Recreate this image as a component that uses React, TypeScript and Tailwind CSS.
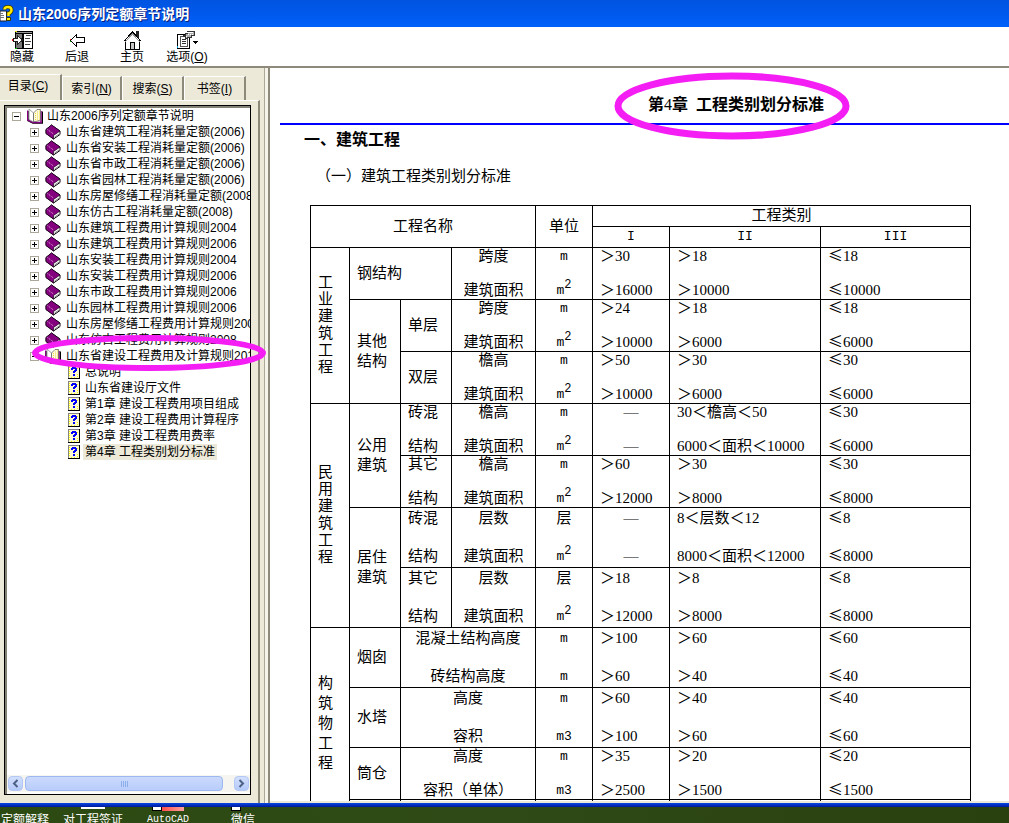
import { useState, type ReactNode } from 'react'

interface TreeBook {
  title: string
  pages?: string[]
}

interface LeadCell {
  text: string
  rowSpan?: number
  colSpan?: number
  stack?: 'tight' | 'loose' | 'pair'
}

interface StandardRow {
  lead: LeadCell[]
  names: [string, string]
  nameSpan?: number
  units: [string, string]
  one: [string, string]
  two: [string, string]
  three: [string, string]
  tall?: boolean
}

const books: TreeBook[] = [
  { title: '山东省建筑工程消耗量定额(2006)' },
  { title: '山东省安装工程消耗量定额(2006)' },
  { title: '山东省市政工程消耗量定额(2006)' },
  { title: '山东省园林工程消耗量定额(2006)' },
  { title: '山东房屋修缮工程消耗量定额(2008)' },
  { title: '山东仿古工程消耗量定额(2008)' },
  { title: '山东建筑工程费用计算规则2004' },
  { title: '山东建筑工程费用计算规则2006' },
  { title: '山东安装工程费用计算规则2004' },
  { title: '山东安装工程费用计算规则2006' },
  { title: '山东市政工程费用计算规则2006' },
  { title: '山东园林工程费用计算规则2006' },
  { title: '山东房屋修缮工程费用计算规则2008' },
  { title: '山东仿古工程费用计算规则2008' },
  {
    title: '山东省建设工程费用及计算规则2011',
    pages: [
      '总说明',
      '山东省建设厅文件',
      '第1章 建设工程费用项目组成',
      '第2章 建设工程费用计算程序',
      '第3章 建设工程费用费率',
      '第4章 工程类别划分标准',
    ],
  },
]

const tabs = [
  { label: '目录', hotkey: 'C', width: 'w-[62px]' },
  { label: '索引', hotkey: 'N', width: 'w-[60px]' },
  { label: '搜索', hotkey: 'S', width: 'w-[62px]' },
  { label: '书签', hotkey: 'I', width: 'w-[62px]' },
]

const rows: StandardRow[] = [
  {
    lead: [{ text: '工业建筑工程', rowSpan: 3, stack: 'tight' }, { text: '钢结构', colSpan: 2 }],
    names: ['跨度', '建筑面积'], units: ['m', 'm2'],
    one: ['＞30', '＞16000'], two: ['＞18', '＞10000'], three: ['≤18', '≤10000'],
  },
  {
    lead: [{ text: '其他结构', rowSpan: 2, stack: 'loose' }, { text: '单层' }],
    names: ['跨度', '建筑面积'], units: ['m', 'm2'],
    one: ['＞24', '＞10000'], two: ['＞18', '＞6000'], three: ['≤18', '≤6000'],
  },
  {
    lead: [{ text: '双层' }],
    names: ['檐高', '建筑面积'], units: ['m', 'm2'],
    one: ['＞50', '＞10000'], two: ['＞30', '＞6000'], three: ['≤30', '≤6000'],
  },
  {
    lead: [
      { text: '民用建筑工程', rowSpan: 4, stack: 'tight' },
      { text: '公用建筑', rowSpan: 2, stack: 'loose' },
      { text: '砖混结构', stack: 'pair' },
    ],
    names: ['檐高', '建筑面积'], units: ['m', 'm2'],
    one: ['—', '—'], two: ['30＜檐高＜50', '6000＜面积＜10000'], three: ['≤30', '≤6000'],
  },
  {
    lead: [{ text: '其它结构', stack: 'pair' }],
    names: ['檐高', '建筑面积'], units: ['m', 'm2'],
    one: ['＞60', '＞12000'], two: ['＞30', '＞8000'], three: ['≤30', '≤8000'],
  },
  {
    lead: [{ text: '居住建筑', rowSpan: 2, stack: 'loose' }, { text: '砖混结构', stack: 'pair' }],
    names: ['层数', '建筑面积'], units: ['层', 'm2'],
    one: ['—', '—'], two: ['8＜层数＜12', '8000＜面积＜12000'], three: ['≤8', '≤8000'],
    tall: true,
  },
  {
    lead: [{ text: '其它结构', stack: 'pair' }],
    names: ['层数', '建筑面积'], units: ['层', 'm2'],
    one: ['＞18', '＞12000'], two: ['＞8', '＞8000'], three: ['≤8', '≤8000'],
    tall: true,
  },
  {
    lead: [{ text: '构筑物工程', rowSpan: 4, stack: 'loose' }, { text: '烟囱' }],
    names: ['混凝土结构高度', '砖结构高度'], nameSpan: 2, units: ['m', 'm'],
    one: ['＞100', '＞60'], two: ['＞60', '＞40'], three: ['≤60', '≤40'],
    tall: true,
  },
  {
    lead: [{ text: '水塔' }],
    names: ['高度', '容积'], nameSpan: 2, units: ['m', 'm3'],
    one: ['＞60', '＞100'], two: ['＞40', '＞60'], three: ['≤40', '≤60'],
    tall: true,
  },
  {
    lead: [{ text: '筒仓' }],
    names: ['高度', '容积（单体）'], nameSpan: 2, units: ['m', 'm3'],
    one: ['＞35', '＞2500'], two: ['＞20', '＞1500'], three: ['≤20', '≤1500'],
  },
]

const cellCls = 'border border-black p-0'
const headCls = 'border border-black px-0 pt-0 pb-[2px] font-normal'

function BookIcon() {
  return (
    <svg width="16" height="16" viewBox="0 0 16 16" className="shrink-0">
      <path d="M6.500 1L15 7v3.500L8.500 15 1 9.500v-4z" fill="#fff" stroke="#000" />
      <path d="M6.500 1L15 7 8.500 11.500V15L1 9.500v-4z" fill="#84007f" stroke="#1a001a" strokeWidth="0.700" />
      <path d="M9.500 13L15 9.500" stroke="#8c8c8c" />
      <path d="M2.500 5.500l6 4.500" stroke="#e4b8e4" strokeDasharray="1 1" />
    </svg>
  )
}

function OpenBookIcon() {
  return (
    <svg width="16" height="16" viewBox="0 0 16 16" className="shrink-0">
      <path d="M1 3v9.500L6 15h9.500V3.500" fill="none" stroke="#000" strokeWidth="1.500" />
      <path d="M.5 2.500v9.500L6 14.500h8V3" fill="none" stroke="#84007f" strokeWidth="1.500" />
      <path d="M2 1l4.500 4v9L2 11.500z" fill="#fff" stroke="#8c8c8c" strokeWidth="0.800" />
      <path d="M6.500 5l3.500-3.500h3.500V12L9 13.500H6.500z" fill="#fffbe0" stroke="#555" strokeWidth="0.700" />
      <path d="M8.500 5v8M10.500 3.500v9M12.500 2.500v9" stroke="#ecd83c" strokeDasharray="1 1" />
    </svg>
  )
}

function PageIcon() {
  return (
    <svg width="12" height="14" viewBox="0 0 12 14" className="shrink-0" shapeRendering="crispEdges">
      <path d="M0 0h12v14H0z" fill="#000" />
      <path d="M0 0h11v13H0z" fill="#848284" />
      <path d="M1 1h10v12H1z" fill="#fffbd0" />
      <path d="M1 2h1v1H1zM1 4h1v1H1zM1 6h1v1H1zM1 8h1v1H1zM1 10h1v1H1zM9 3h1v1H9zM9 9h1v1H9zM9 11h1v1H9zM3 12h1v1H3zM6 12h1v1H6z" fill="#ffff00" />
      <path d="M3 3h1V2h4v1h1v3H8v1H7v1H5V6h1V5h1V4H5v1H3zM5 9h2v2H5z" fill="#0000ff" />
    </svg>
  )
}

function Expander({ open }: { open: boolean }) {
  return (
    <svg width="9" height="9" viewBox="0 0 9 9" className="shrink-0" shapeRendering="crispEdges">
      <path d="M0 0h9v9H0z" fill="#aca899" />
      <path d="M1 1h7v7H1z" fill="#fff" />
      <path d={open ? 'M2 4h5v1H2z' : 'M2 4h5v1H2zM4 2h1v5H4z'} fill="#000" />
    </svg>
  )
}

function HideIcon() {
  return (
    <svg width="22" height="20" viewBox="0 0 22 20" shapeRendering="crispEdges">
      <path d="M4 1h18v18H4z" fill="#000" />
      <path d="M5 2h16v1H5z" fill="#999" />
      <path d="M5 4h6v14H5z" fill="#777" />
      <path d="M13 4h8v14h-8z" fill="#fff" />
      <path d="M15 5h5v1h-5zM14 8h5v1h-5zM14 11h6v1h-6zM14 14h5v1h-5z" fill="#444" />
      <path d="M2.500 8.500h4v-3l5 4.500-5 4.500v-3h-4z" fill="#fff" stroke="#222" />
      <path d="M4 1h2v1H4z" fill="#e8d800" />
      <path d="M1 9h1v2H1z" fill="#f00" />
      <path d="M4 18h2v1H4z" fill="#0b0" />
    </svg>
  )
}

function BackIcon() {
  return (
    <svg width="22" height="20" viewBox="0 0 22 20" shapeRendering="crispEdges">
      <path d="M4.500 10.500l6-6v3h8v5h-8v4z" fill="#fff" stroke="#000" />
      <path d="M4 9h1v1H4z" fill="#f00" />
      <path d="M4 11h1v1H4z" fill="#0b0" />
    </svg>
  )
}

function HomeIcon() {
  return (
    <svg width="22" height="20" viewBox="0 0 22 20" shapeRendering="crispEdges">
      <path d="M15 1h3v7h-3z" fill="#222" />
      <path d="M4.500 9.500v10h14v-10l-7-7z" fill="#fff" stroke="#000" />
      <path d="M2.500 11.500l9-9.500 9 9.500" fill="none" stroke="#000" />
      <path d="M4 12l7.500-8 7.500 8" fill="none" stroke="#999" />
      <path d="M9.500 12.500h4v7h-4z" fill="#c8c8c8" stroke="#000" />
    </svg>
  )
}

function OptionsIcon() {
  return (
    <svg width="22" height="20" viewBox="0 0 22 20" shapeRendering="crispEdges">
      <path d="M1.500 4.500h12v14h-12z" fill="#fff" stroke="#000" />
      <path d="M4.500 6.500h7v10h-7z" fill="#fff" stroke="#555" />
      <path d="M6 9h4v1H6zM6 11h4v1H6zM6 13h4v1H6z" fill="#333" />
      <path d="M7 5h2V3h2V1h7v4h-3v2h-4v1H9V6H7z" fill="#b0b0b0" stroke="#333" />
      <path d="M11 2h6v1h-6zM12 4h1v1h-1zM14 4h1v1h-1zM16 4h1v1h-1zM10 6h1v1h-1z" fill="#fff" />
      <path d="M17 11h5v1h-1v1h-1v1h-1v-1h-1v-1h-1z" fill="#000" />
      <path d="M1 16h1v2H1z" fill="#00a0e0" />
    </svg>
  )
}

function HelpLogo() {
  return (
    <svg width="16" height="18" viewBox="0 0 16 18" className="shrink-0">
      <path d="M0 6h6.500v10H0z" fill="#fff" stroke="#222" />
      <path d="M0 8.500h3M0 10.500h4M0 12.500h4" stroke="#777" />
      <path d="M4.500 4.500Q4.500 2 8 2t3.500 3Q11.500 7.500 8.500 8.500v2.500" fill="none" stroke="#3a3600" strokeWidth="4" />
      <path d="M4.500 4.500Q4.500 2 8 2t3.500 3Q11.500 7.500 8.500 8.500v2.500" fill="none" stroke="#ffea00" strokeWidth="2.500" />
      <path d="M6.500 12.500h4v3h-4z" fill="#ffea00" stroke="#3a3600" />
    </svg>
  )
}

function Hotkey({ label, hotkey }: { label: string; hotkey: string }) {
  return (
    <span>
      {label}(<u>{hotkey}</u>)
    </span>
  )
}

function ToolButton({ className, icon, children }: { className: string; icon: ReactNode; children: ReactNode }) {
  return (
    <button className={`flex flex-col items-center text-xs leading-[14px] whitespace-nowrap ${className}`}>
      {icon}
      {children}
    </button>
  )
}

function ContentsTree() {
  const [rootOpen, setRootOpen] = useState(true)
  const [openBook, setOpenBook] = useState(14)
  const [page, setPage] = useState('第4章 工程类别划分标准')

  return (
    <ul className="min-h-0 flex-1 overflow-hidden text-xs leading-4 whitespace-nowrap">
      <li>
        <button onClick={() => setRootOpen(!rootOpen)} className="flex h-4 items-center pl-[5px]">
          <Expander open={rootOpen} />
          <span className="ml-[6px]"><OpenBookIcon /></span>
          <span className="ml-1">山东2006序列定额章节说明</span>
        </button>
        {rootOpen && (
          <ul>
            {books.map((book, i) => (
              <li key={book.title}>
                <button
                  onClick={() => setOpenBook(openBook === i ? -1 : i)}
                  className="flex h-4 items-center pl-[23px]"
                >
                  <Expander open={openBook === i} />
                  <span className="ml-[6px]">{openBook === i ? <OpenBookIcon /> : <BookIcon />}</span>
                  <span className="ml-[5px]">{book.title}</span>
                </button>
                {openBook === i && book.pages && (
                  <ul>
                    {book.pages.map((title) => (
                      <li key={title}>
                        <button onClick={() => setPage(title)} className="flex h-4 items-center pl-[61px]">
                          <PageIcon />
                          <span className={`ml-[3px] px-[2px] ${title === page ? 'bg-[#ece9d8]' : ''}`}>{title}</span>
                        </button>
                      </li>
                    ))}
                  </ul>
                )}
              </li>
            ))}
          </ul>
        )}
      </li>
    </ul>
  )
}

function ScrollBar() {
  const btnCls = 'flex h-[15px] w-[15px] items-center justify-center rounded-sm border border-[#b4c8f6] bg-linear-to-b from-[#d3e0fd] to-[#b5cafa]'
  return (
    <div className="mb-[2px] flex h-[17px] items-center bg-[#f6f5f0] px-px">
      <button className={btnCls} aria-label="向左滚动">
        <svg width="7" height="9" viewBox="0 0 7 9"><path d="M5.500 1L2 4.500 5.500 8" fill="none" stroke="#4d6185" strokeWidth="2" /></svg>
      </button>
      <div className="ml-[2px] flex h-[15px] w-[198px] items-center justify-center gap-px rounded-sm border border-[#9db8f0] bg-linear-to-b from-[#cbdafd] to-[#b9cdfb]">
        <span className="h-[6px] w-px bg-[#8caeea]" />
        <span className="h-[6px] w-px bg-[#8caeea]" />
        <span className="h-[6px] w-px bg-[#8caeea]" />
        <span className="h-[6px] w-px bg-[#8caeea]" />
      </div>
      <button className={`ml-auto ${btnCls}`} aria-label="向右滚动">
        <svg width="7" height="9" viewBox="0 0 7 9"><path d="M1.500 1L5 4.500 1.500 8" fill="none" stroke="#4d6185" strokeWidth="2" /></svg>
      </button>
    </div>
  )
}

function Sidebar() {
  const [active, setActive] = useState('目录')

  return (
    <aside className="relative flex w-[270px] shrink-0 bg-[#ece9d8]">
      <div className="flex min-w-0 flex-1 flex-col pt-[6px]">
        <div role="tablist" className="flex h-[26px] items-end text-xs">
          {tabs.map((tab) => (
            <button
              key={tab.label}
              role="tab"
              aria-selected={active === tab.label}
              onClick={() => setActive(tab.label)}
              className={`border-t border-t-white border-r-2 border-r-[#8d8a7c] ${tab.width} ${
                active === tab.label ? 'h-[26px] pr-1 pb-[3px]' : 'h-6 border-l border-l-white'
              }`}
            >
              <Hotkey label={tab.label} hotkey={tab.hotkey} />
            </button>
          ))}
        </div>
        <div className="flex min-h-0 flex-1 flex-col border-t border-r-2 border-t-white border-r-[#8d8a7c] pt-1 pr-[7px] pb-2 pl-1">
          <div className="flex min-h-0 flex-1 flex-col border border-black bg-white">
            <div className="flex min-h-0 flex-1 flex-col border-t-2 border-l-2 border-[#848277]">
              <ContentsTree />
              <ScrollBar />
            </div>
          </div>
        </div>
      </div>
      <div className="ml-1 w-[6px] border-r-2 border-l border-r-[#8d8a7c] border-l-[#aca899] bg-[#f6f4ea]" />
      <svg className="pointer-events-none absolute top-[267px] left-[31px] z-10" width="236" height="36" viewBox="0 0 236 36">
        <ellipse cx="118" cy="18" rx="114" ry="15" fill="none" stroke="#f41df4" strokeWidth="6" />
      </svg>
    </aside>
  )
}

// ≤ is taken from the CJK face so that it keeps its full-width cell
function Value({ text }: { text: string }) {
  if (!text.startsWith('≤')) return <>{text}</>
  return (
    <>
      <span className="font-['Noto_Sans_CJK_SC',sans-serif] leading-[0px]">≤</span>
      {text.slice(1)}
    </>
  )
}

function Unit({ text }: { text: string }) {
  if (text === 'm2') {
    return <span className="font-['Liberation_Mono',monospace] text-[13px]">m<sup className="text-xs">2</sup></span>
  }
  if (text.startsWith('m')) {
    return <span className="font-['Liberation_Mono',monospace] text-[13px]">{text}</span>
  }
  return <>{text}</>
}

function Pair({ tall, className, children }: { tall?: boolean; className?: string; children: ReactNode }) {
  return (
    <div className={`flex flex-col justify-between leading-[17px] whitespace-nowrap ${tall ? 'h-[59px] py-[2px]' : 'h-[51px]'} ${className ?? ''}`}>
      {children}
    </div>
  )
}

function Lead({ cell, tall }: { cell: LeadCell; tall?: boolean }) {
  let content: ReactNode = cell.text
  if (cell.stack === 'pair') {
    content = (
      <Pair tall={tall}>
        <span>{cell.text.slice(0, 2)}</span>
        <span>{cell.text.slice(2)}</span>
      </Pair>
    )
  } else if (cell.stack) {
    const oneChar = (cell.rowSpan ?? 1) > 2
    content = (
      <div className={`${oneChar ? 'w-[15px]' : 'w-[30px]'} ${cell.stack === 'tight' ? 'leading-[17px]' : 'leading-5'}`}>
        {cell.text}
      </div>
    )
  }
  return (
    <td
      rowSpan={cell.rowSpan}
      colSpan={cell.colSpan}
      className={`border border-black pt-0 pr-0 pl-[7px] ${cell.stack === 'pair' ? 'pb-0' : 'pb-[2px]'}`}
    >
      {content}
    </td>
  )
}

function StandardTable() {
  return (
    <table className="mt-[18px] ml-[30px] w-[661px] table-fixed border-collapse text-[15px] leading-[18px]">
      <colgroup>
        <col className="w-[39px]" />
        <col className="w-[51px]" />
        <col className="w-[51px]" />
        <col className="w-[84px]" />
        <col className="w-[57px]" />
        <col className="w-[77px]" />
        <col className="w-[151px]" />
        <col className="w-[150px]" />
      </colgroup>
      <thead>
        <tr className="h-[21px]">
          <th rowSpan={2} colSpan={4} className={headCls}>工程名称</th>
          <th rowSpan={2} className={headCls}>单位</th>
          <th colSpan={3} className={headCls}>工程类别</th>
        </tr>
        <tr className="h-[21px] font-['Liberation_Mono',monospace] text-[13px]">
          <th className={`${cellCls} font-normal`}>I</th>
          <th className={`${cellCls} font-normal`}>II</th>
          <th className={`${cellCls} font-normal`}>III</th>
        </tr>
      </thead>
      <tbody>
        {rows.map((row, i) => (
          <tr key={i}>
            {row.lead.map((cell) => (
              <Lead key={cell.text} cell={cell} tall={row.tall} />
            ))}
            <td colSpan={row.nameSpan} className={cellCls}>
              <Pair tall={row.tall} className="items-center">
                <span>{row.names[0]}</span>
                <span>{row.names[1]}</span>
              </Pair>
            </td>
            <td className={cellCls}>
              <Pair tall={row.tall} className="items-center">
                <Unit text={row.units[0]} />
                <Unit text={row.units[1]} />
              </Pair>
            </td>
            {[row.one, row.two, row.three].map((values, j) => (
              <td key={j} className={cellCls}>
                <Pair tall={row.tall} className={values[0] === '—' ? 'items-center' : 'pl-[7px]'}>
                  <span><Value text={values[0]} /></span>
                  <span><Value text={values[1]} /></span>
                </Pair>
              </td>
            ))}
          </tr>
        ))}
        <tr className="h-5">
          <td className={cellCls} />
          <td colSpan={2} className={cellCls} />
          <td className={cellCls} />
          <td className={cellCls} />
          <td className={cellCls} />
          <td className={cellCls} />
        </tr>
      </tbody>
    </table>
  )
}

function Article() {
  return (
    <main className="min-w-0 flex-1 overflow-hidden border-b-2 border-[#ece9d8] bg-white pt-[26px] pl-[10px] font-['Liberation_Serif','Noto_Sans_CJK_SC',serif]">
      <div className="flex pl-[368px]">
        <h1 className="relative text-base leading-[22px] font-bold whitespace-nowrap">
          第<span className="font-normal">4</span>章 <span className="ml-1">工程类别划分标准</span>
          <svg className="pointer-events-none absolute -top-[22px] -left-[36px] z-10" width="240" height="68" viewBox="0 0 240 68">
            <ellipse cx="120" cy="34" rx="114" ry="30" fill="none" stroke="#f41df4" strokeWidth="7" />
          </svg>
        </h1>
      </div>
      <hr className="mt-[7px] h-[2px] border-0 bg-[#0000ff]" />
      <h2 className="mt-1 pl-6 text-base leading-[22px] font-bold">一、建筑工程</h2>
      <h3 className="mt-[14px] pl-9 text-[15px] leading-[22px]">（一）建筑工程类别划分标准</h3>
      <StandardTable />
    </main>
  )
}

function DesktopStrip() {
  return (
    <div className="grid h-4 grid-cols-[50px_86px_64px_86px] justify-items-center overflow-hidden bg-linear-to-r from-[#2c4a12] via-[#2f4a16] to-[#29400f] text-xs leading-4 text-white">
      <div className="pt-[5px]">定额解释</div>
      <div className="flex flex-col items-center">
        <span className="h-[2px] w-6 bg-white" />
        <span className="mt-[3px]">对工程签证</span>
      </div>
      <div className="flex flex-col items-center">
        <span className="flex h-1">
          <span className="w-[10px] border border-t-0 border-black bg-white" />
          <span className="w-[22px] bg-linear-to-r from-[#ff4a4a] to-[#ffa0a0]" />
        </span>
        <span className="mt-px font-['Liberation_Mono',monospace] text-[10px]">AutoCAD</span>
      </div>
      <div className="flex flex-col">
        <span className="h-1 w-[10px] border border-t-0 border-black bg-white" />
        <span className="mt-px">微信</span>
      </div>
    </div>
  )
}

export default function App() {
  return (
    <div className="flex h-screen flex-col overflow-hidden bg-white font-['Liberation_Sans','Noto_Sans_CJK_SC',sans-serif] text-black">
      <header className="flex h-[27px] shrink-0 items-center bg-linear-to-b from-[#0054e0] via-[#0058ec] to-[#0062fa] text-sm font-bold text-white text-shadow-[1px_1px_0_#0a1f80]">
        <HelpLogo />
        <span className="ml-[2px]">山东2006序列定额章节说明</span>
      </header>
      <nav className="flex h-[41px] shrink-0 border-b-2 border-[#8d8a7c] bg-white pt-[3px]">
        <ToolButton className="w-11" icon={<HideIcon />}>隐藏</ToolButton>
        <ToolButton className="w-[66px]" icon={<BackIcon />}>后退</ToolButton>
        <ToolButton className="w-11" icon={<HomeIcon />}>主页</ToolButton>
        <ToolButton className="w-[66px]" icon={<OptionsIcon />}>
          <Hotkey label="选项" hotkey="O" />
        </ToolButton>
      </nav>
      <div className="flex min-h-0 flex-1">
        <Sidebar />
        <Article />
      </div>
      <div className="h-1 shrink-0 bg-linear-to-b from-[#0a46e6] to-[#00189c]" />
      <DesktopStrip />
    </div>
  )
}
